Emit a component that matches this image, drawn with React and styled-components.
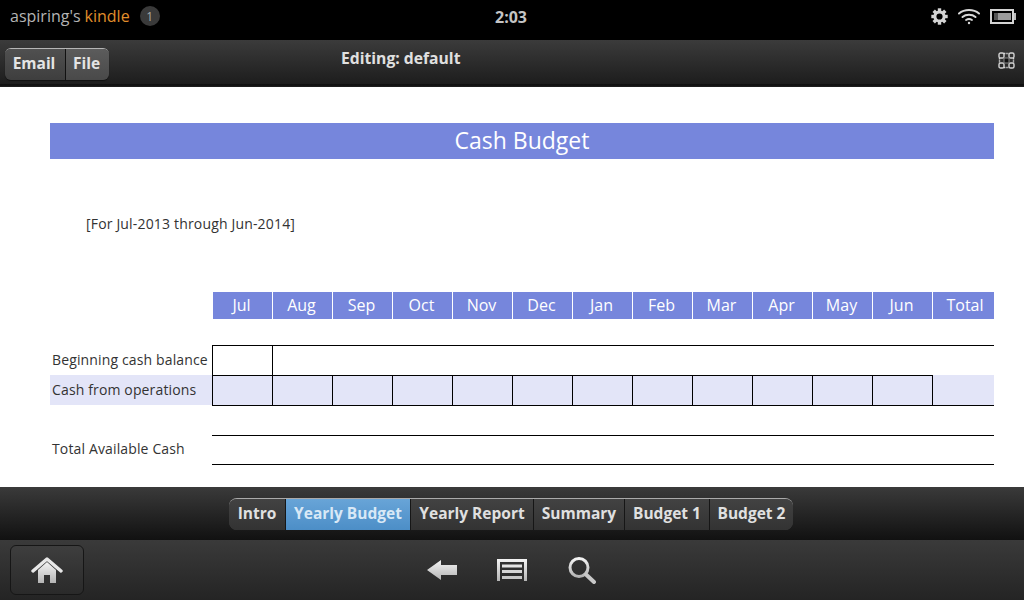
import React from "react";
import styled, { createGlobalStyle } from "styled-components";

const Global = createGlobalStyle`
  html, body { margin: 0; padding: 0; background: #fff; }
  body { font-family: "Open Sans", "Noto Sans", sans-serif; }
  * { box-sizing: border-box; }
`;

const Page = styled.div`
  width: 1024px; height: 600px; display: flex; flex-direction: column; overflow: hidden;
`;

const StatusBar = styled.div`
  height: 40px; background: #000; display: flex; align-items: center; position: relative;
  padding: 0 8px 8px 10px; flex: none;
`;
const Brand = styled.div`
  font-size: 16px; color: #b4b4b4; display: flex; gap: 4px;
`;
const Kindle = styled.span`color: #e08e2b;`;
const Badge = styled.div`
  width: 20px; height: 20px; border-radius: 50%; background: #3a3a3a; color: #aaa;
  font-size: 12px; display: flex; align-items: center; justify-content: center; margin-left: 10px;
`;
const Clock = styled.div`
  position: absolute; left: 0; right: 2px; top: 6px; text-align: center; color: #c4c4c4;
  font-size: 16px; font-weight: 700; pointer-events: none;
`;
const StatusIcons = styled.div`
  margin-left: auto; display: flex; align-items: center; gap: 10px;
`;

const Toolbar = styled.div`
  height: 47px; flex: none; position: relative; padding: 8px 0 0 5px; display: flex; align-items: flex-start;
  background: linear-gradient(#3b3b3b, #1d1d1d 94%, #0a0a0a 95%, #222);
`;
const ButtonGroup = styled.div`
  display: flex; height: 32px; border-radius: 6px; overflow: hidden; border-top: 1px solid #b5b5b5;
  box-shadow: 0 1px 1px rgba(0,0,0,.5);
`;
const ToolButton = styled.div`
  width: ${p => p.$w}px; padding: 0 2px 3px 0; display: flex; align-items: center; justify-content: center;
  color: #e4e4e4; font-size: 15.5px; font-weight: 700;
  background: ${p => p.$light ? "linear-gradient(#5c5c5c,#494949)" : "linear-gradient(#505050,#3e3e3e)"};
  ${p => p.$light ? "border-left: 1px solid #111;" : ""}
`;
const EditTitle = styled.div`
  position: absolute; left: 341px; top: 7px; color: #e0e0e0; font-size: 15.7px; font-weight: 700;
`;
const CornerIcon = styled.div`position: absolute; right: 9px; top: 12px; display: flex;`;

const Content = styled.div`
  flex: 1; background: #fff; padding: 36px 30px 0 50px;
`;
const Title = styled.div`
  height: 36px; background: #7686dc; color: #fff; font-size: 23px; text-align: center; line-height: 35px;
`;
const Period = styled.div`
  margin: 55px 0 0 36px; font-size: 14px; line-height: 20px; color: #333; letter-spacing: 0.17px;
`;
const Sheet = styled.div`
  margin-top: 58px; display: grid;
  grid-template-columns: 162px repeat(12, 60px) 62px;
  grid-template-rows: 53px;
  grid-auto-rows: 30px;
`;
const HeaderRow = styled.div`
  grid-column: 1 / -1; height: 27px; display: grid; grid-template-columns: subgrid;
`;
const Head = styled.div`
  margin-left: 1px; padding: ${p => p.$total ? "0 0 0 3px" : "0 2px 0 0"}; background: #7686dc; color: #fff;
  font-size: 16px; text-align: center; line-height: 27px;
  grid-column: ${p => p.$col};
`;
const Label = styled.div`
  font-size: 14px; color: #333; line-height: ${p => p.$tight ? 28 : 30}px; padding-left: 2px; white-space: nowrap; letter-spacing: 0.14px;
  background: ${p => p.$shade ? "#e3e5f8" : "transparent"};
`;
const Cell = styled.div`
  background: ${p => p.$shade ? "#e3e5f8" : "transparent"};
  border-top: ${p => p.$top ? "1px solid #000" : "0"};
  border-left: ${p => p.$left ? "1px solid #000" : "0"};
  border-bottom: ${p => p.$bottom ? "1px solid #000" : "0"};
`;
const Spacer = styled.div`grid-row: auto;`;

const TabBar = styled.div`
  height: 53px; flex: none; display: flex; justify-content: center; align-items: flex-start; padding: 11px 2px 0 0;
  background: linear-gradient(#3a3a3a, #111 100%);
`;
const Tabs = styled.div`
  display: flex; height: 32px; border-radius: 8px; overflow: hidden; background: #3c3c3c;
  border-top: 1px solid #aaa;
`;
const Tab = styled.div`
  width: ${p => p.$w}px; padding-bottom: 3px; display: flex; align-items: center; justify-content: center;
  font-size: 15.5px; font-weight: 700; color: ${p => p.$active ? "#d8e8f6" : "#e0e0e0"};
  background: ${p => p.$active ? "linear-gradient(#69a5d8,#4c8ec7)" : "linear-gradient(#424242,#333)"};
  margin-top: ${p => p.$active ? "-1px" : "0"};
  ${p => p.$first ? "" : "border-left: 1px solid #161616;"}
`;

const NavBar = styled.div`
  height: 60px; flex: none; position: relative; display: flex; align-items: center; justify-content: center; gap: 38px;
  padding: 0 2px 0 0; background: linear-gradient(#3a3a3a, #242424);
`;
const HomeButton = styled.div`
  position: absolute; left: 10px; top: 5px; width: 74px; height: 50px; border-radius: 6px; border: 1px solid #161616;
  background: linear-gradient(#3e3e3e, #2a2a2a); display: flex; align-items: center; justify-content: center;
`;

const months = ["Jul","Aug","Sep","Oct","Nov","Dec","Jan","Feb","Mar","Apr","May","Jun","Total"];

const Defs = () => (
  <svg width="0" height="0" style={{ position: "absolute" }}>
    <defs>
      <linearGradient id="ig" x1="0" y1="0" x2="0" y2="1">
        <stop offset="0" stopColor="#f4f4f4" />
        <stop offset="1" stopColor="#b4b4b4" />
      </linearGradient>
    </defs>
  </svg>
);

const Gear = () => {
  const teeth = [0,45,90,135,180,225,270,315];
  return (
    <svg width="17" height="17" viewBox="0 0 17 17">
      {teeth.map(a => <rect key={a} x="6.8" y="0.3" width="3.4" height="4" fill="#d4d4d4" transform={`rotate(${a} 8.5 8.5)`} />)}
      <circle cx="8.5" cy="8.5" r="4.6" fill="none" stroke="#d4d4d4" strokeWidth="3" />
    </svg>
  );
};
const Wifi = () => (
  <svg width="22" height="17" viewBox="0 0 22 17" fill="none" stroke="#d8d8d8" strokeLinecap="round">
    <path d="M1 5.5C6.5 0.8 15.5 0.8 21 5.5" strokeWidth="2" />
    <path d="M4.5 9C8 6 14 6 17.5 9" strokeWidth="2" />
    <path d="M8 12C9.8 10.8 12.2 10.8 14 12" strokeWidth="1.8" />
    <circle cx="11" cy="15" r="1.2" fill="#d8d8d8" stroke="none" />
  </svg>
);
const Battery = () => (
  <svg width="26" height="15" viewBox="0 0 26 15">
    <rect x="1" y="1" width="22" height="13" fill="none" stroke="#d4d4d4" strokeWidth="2" />
    <rect x="4" y="4" width="17" height="7" fill="#9a9a9a" />
    <rect x="4" y="4" width="4" height="7" fill="#555" />
    <rect x="24" y="4" width="2" height="7" fill="#bbb" />
  </svg>
);
const Fullscreen = () => (
  <svg width="17" height="17" viewBox="0 0 17 17" fill="none" stroke="#d4d4d4" strokeWidth="1.4">
    <rect x="1" y="1" width="5" height="5" rx="1.6" />
    <rect x="11" y="1" width="5" height="5" rx="1.6" />
    <rect x="1" y="11" width="5" height="5" rx="1.6" />
    <rect x="11" y="11" width="5" height="5" rx="1.6" />
    <path d="M6 1.5h5M6 15.5h5M1.5 6v5M15.5 6v5" strokeDasharray="1.4 0.9" />
    <rect x="6" y="6" width="5" height="5" fill="#111" stroke="#888" strokeWidth="1" />
  </svg>
);
const Home = () => (
  <svg width="32" height="28" viewBox="0 0 32 28">
    <path d="M7 14L16 6l9 8v13H19v-8h-6v8H7z" fill="url(#ig)" />
    <path d="M2 15L16 3l14 12" fill="none" stroke="#e8e8e8" strokeWidth="3.4" strokeLinecap="round" strokeLinejoin="round" />
  </svg>
);
const Back = () => (
  <svg width="32" height="24" viewBox="0 0 32 24">
    <path d="M1 12L15 2v5h16v10H15v5z" fill="url(#ig)" />
  </svg>
);
const ListIcon = () => (
  <svg width="32" height="24" viewBox="0 0 32 24">
    <path d="M1 1h30v22h-3V4H4v19H1z" fill="url(#ig)" />
    <rect x="6" y="6.5" width="20" height="3" fill="#e4e4e4" />
    <rect x="6" y="12" width="20" height="3" fill="#d6d6d6" />
    <rect x="6" y="18" width="20" height="3" fill="#c8c8c8" />
  </svg>
);
const Search = () => (
  <svg width="30" height="28" viewBox="-1 0 30 28" fill="none">
    <circle cx="12" cy="11.5" r="9" stroke="url(#ig)" strokeWidth="3" />
    <path d="M19 18.5L27 26" stroke="#c8c8c8" strokeWidth="4" strokeLinecap="round" />
  </svg>
);

const cols = Array.from({ length: 13 });
const tabs = [["Intro", 56], ["Yearly Budget", 125], ["Yearly Report", 123], ["Summary", 91], ["Budget 1", 85], ["Budget 2", 84]];

export default function App() {
  return (
    <Page>
      <Global />
      <Defs />
      <StatusBar>
        <Brand><span>aspiring's</span><Kindle>kindle</Kindle></Brand>
        <Badge>1</Badge>
        <Clock>2:03</Clock>
        <StatusIcons><Gear /><Wifi /><Battery /></StatusIcons>
      </StatusBar>
      <Toolbar>
        <ButtonGroup>
          <ToolButton $w={60}>Email</ToolButton>
          <ToolButton $w={44} $light>File</ToolButton>
        </ButtonGroup>
        <EditTitle>Editing: default</EditTitle>
        <CornerIcon><Fullscreen /></CornerIcon>
      </Toolbar>
      <Content>
        <Title>Cash Budget</Title>
        <Period>[For Jul-2013 through Jun-2014]</Period>
        <Sheet>
          <HeaderRow>
            {months.map((m, i) => <Head key={m} $col={i + 2} $total={m === "Total"}>{m}</Head>)}
          </HeaderRow>
          <Label>Beginning cash balance</Label>
          {cols.map((_, i) => <Cell key={i} $top $left={i < 2} />)}
          <Label $shade>Cash from operations</Label>
          {cols.map((_, i) => <Cell key={i} $top={i < 12} $left $shade />)}
          <Spacer />
          {cols.map((_, i) => <Cell key={i} $top />)}
          <Label $tight>Total Available Cash</Label>
          {cols.map((_, i) => <Cell key={i} $top $bottom />)}
        </Sheet>
      </Content>
      <TabBar>
        <Tabs>
          {tabs.map(([name, w], i) => <Tab key={name} $w={w} $first={i === 0} $active={i === 1}>{name}</Tab>)}
        </Tabs>
      </TabBar>
      <NavBar>
        <HomeButton><Home /></HomeButton>
        <Back /><ListIcon /><Search />
      </NavBar>
    </Page>
  );
}
